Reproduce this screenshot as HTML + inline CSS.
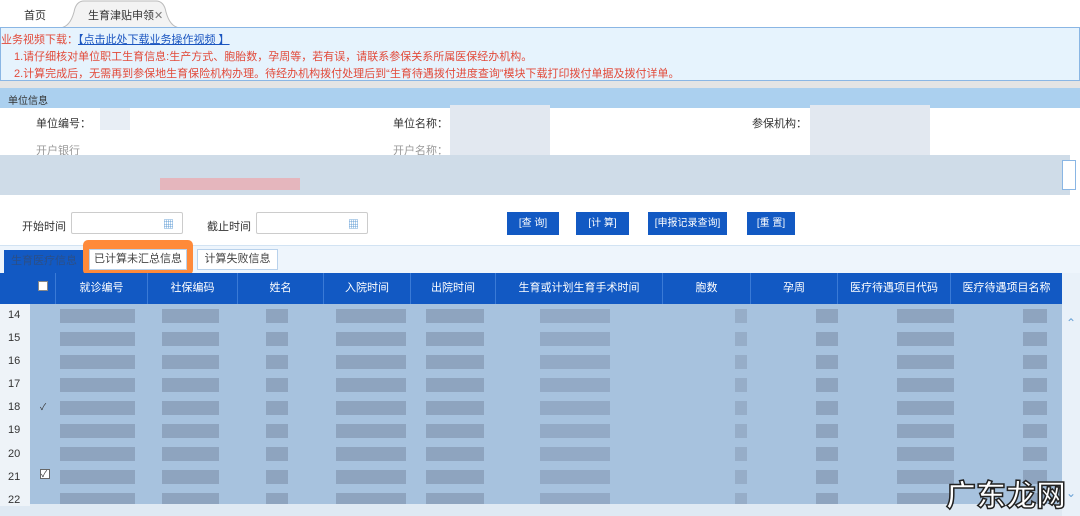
<!DOCTYPE html><html><head><meta charset="utf-8"><style>
*{margin:0;padding:0;box-sizing:border-box}
body{width:1080px;height:516px;overflow:hidden;background:#fff;font-family:"Liberation Sans","Noto Sans CJK SC",sans-serif;font-size:11px;color:#333;position:relative}
.a{position:absolute}
</style></head><body>
<div class="a" style="left:24px;top:7px;font-size:11px">首页</div>
<svg class="a" style="left:60px;top:0" width="120" height="29"><path d="M0 28 Q10 27 14 12 Q16 1 24 1 L96 1 Q104 1 106 12 Q110 27 120 28" fill="#f3f3f3" stroke="#bbb"/></svg>
<div class="a" style="left:88px;top:7px;font-size:11px">生育津贴申领<span style="color:#777">✕</span></div>
<div class="a" style="left:0;top:27px;width:1080px;height:54px;background:#e6f3fd;border:1px solid #8ab6e4"></div>
<div class="a" style="left:1px;top:31px;color:#e24a3a">业务视频下载：<span style="color:#1a55c0;text-decoration:underline">【点击此处下载业务操作视频 】</span></div>
<div class="a" style="left:14px;top:48px;color:#e24a3a">1.请仔细核对单位职工生育信息:生产方式、胞胎数，孕周等，若有误，请联系参保关系所属医保经办机构。</div>
<div class="a" style="left:14px;top:65px;color:#e24a3a">2.计算完成后，无需再到参保地生育保险机构办理。待经办机构拨付处理后到“生育待遇拨付进度查询”模块下载打印拨付单据及拨付详单。</div>
<div class="a" style="left:0;top:81px;width:1080px;height:7px;background:#e4e4e4"></div>
<div class="a" style="left:0;top:88px;width:1080px;height:20px;background:#abd0ef"></div>
<div class="a" style="left:8px;top:92px;font-size:10px">单位信息</div>
<div class="a" style="left:36px;top:115px">单位编号：</div>
<div class="a" style="left:393px;top:115px">单位名称：</div>
<div class="a" style="left:752px;top:115px">参保机构：</div>
<div class="a" style="left:36px;top:142px;color:#999">开户银行</div>
<div class="a" style="left:393px;top:142px;color:#999">开户名称：</div>
<div class="a" style="left:100px;top:108px;width:30px;height:22px;background:#e8eef5"></div>
<div class="a" style="left:450px;top:105px;width:100px;height:50px;background:#e2e8f0"></div>
<div class="a" style="left:810px;top:105px;width:120px;height:50px;background:#e2e8f0"></div>
<div class="a" style="left:0;top:155px;width:1070px;height:40px;background:#cfdce8"></div>
<div class="a" style="left:160px;top:178px;width:140px;height:12px;background:#e5b6bd"></div>
<div class="a" style="left:1062px;top:160px;width:14px;height:30px;border:1px solid #8ab6e4;background:#fff"></div>
<div class="a" style="left:22px;top:218px">开始时间</div>
<div class="a" style="left:71px;top:212px;width:112px;height:22px;border:1px solid #ccc;border-radius:2px"></div>
<div class="a" style="left:163px;top:216px;color:#4a8fd0">▦</div>
<div class="a" style="left:207px;top:218px">截止时间</div>
<div class="a" style="left:256px;top:212px;width:112px;height:22px;border:1px solid #ccc;border-radius:2px"></div>
<div class="a" style="left:348px;top:216px;color:#4a8fd0">▦</div>
<div class="a" style="left:507px;top:212px;width:52px;height:23px;background:#1259c3;color:#fff;font-size:10px;line-height:23px;text-align:center">[查 询]</div>
<div class="a" style="left:576px;top:212px;width:53px;height:23px;background:#1259c3;color:#fff;font-size:10px;line-height:23px;text-align:center">[计 算]</div>
<div class="a" style="left:648px;top:212px;width:79px;height:23px;background:#1259c3;color:#fff;font-size:10px;line-height:23px;text-align:center">[申报记录查询]</div>
<div class="a" style="left:747px;top:212px;width:48px;height:23px;background:#1259c3;color:#fff;font-size:10px;line-height:23px;text-align:center">[重 置]</div>
<div class="a" style="left:0;top:245px;width:1080px;height:28px;background:#eef5fc;border-top:1px solid #d2e3f3"></div>
<div class="a" style="left:4px;top:250px;width:80px;height:23px;background:#1259c3;color:#2c4f86;line-height:23px;text-align:center">生育医疗信息</div>
<div class="a" style="left:197px;top:249px;width:81px;height:21px;line-height:19px;text-align:center;color:#444;background:#fff;border:1px solid #b9d2ec">计算失败信息</div>
<div class="a" style="left:83px;top:240px;width:110px;height:35px;background:#ff8a3a;border-radius:5px"></div>
<div class="a" style="left:89px;top:249px;width:98px;height:21px;background:#fff;border:1px solid #b9d2ec;line-height:19px;text-align:center;color:#444">已计算未汇总信息</div>
<div class="a" style="left:0;top:273px;width:1062px;height:31px;background:#1259c3"></div>
<div class="a" style="left:1062px;top:273px;width:18px;height:243px;background:#e9f1f9"></div>
<div class="a" style="left:1066px;top:316px;color:#6aa2d6;font-size:12px">⌃</div>
<div class="a" style="left:1066px;top:486px;color:#6aa2d6;font-size:12px">⌄</div>
<div class="a" style="left:38px;top:281px;width:10px;height:10px;background:#fff;border:1px solid #888"></div>
<div class="a" style="top:273px;left:0;height:31px;width:1062px;color:#fff;font-size:11px;line-height:31px">
<span class="a" style="left:55px;width:92px;text-align:center;border-left:1px solid #3a7ad6">就诊编号</span>
<span class="a" style="left:147px;width:90px;text-align:center;border-left:1px solid #3a7ad6">社保编码</span>
<span class="a" style="left:237px;width:86px;text-align:center;border-left:1px solid #3a7ad6">姓名</span>
<span class="a" style="left:323px;width:87px;text-align:center;border-left:1px solid #3a7ad6">入院时间</span>
<span class="a" style="left:410px;width:85px;text-align:center;border-left:1px solid #3a7ad6">出院时间</span>
<span class="a" style="left:495px;width:167px;text-align:center;border-left:1px solid #3a7ad6">生育或计划生育手术时间</span>
<span class="a" style="left:662px;width:88px;text-align:center;border-left:1px solid #3a7ad6">胞数</span>
<span class="a" style="left:750px;width:87px;text-align:center;border-left:1px solid #3a7ad6">孕周</span>
<span class="a" style="left:837px;width:113px;text-align:center;border-left:1px solid #3a7ad6">医疗待遇项目代码</span>
<span class="a" style="left:950px;width:112px;text-align:center;border-left:1px solid #3a7ad6">医疗待遇项目名称</span>
</div>
<div class="a" style="left:0;top:304px;width:1062px;height:212px;background:#dfe9f3"></div>
<div class="a" style="left:0;top:304px;width:30px;height:202px;background:#eef3f8"></div>
<div class="a" style="left:30px;top:304px;width:1032px;height:200px;background:#a7c2de"></div>
<div class="a" style="left:8px;top:304px;font-size:11px;line-height:23.1px;color:#333">14<br>15<br>16<br>17<br>18<br>19<br>20<br>21<br>22</div>
<div class="a" style="left:40px;top:469px;width:10px;height:10px;background:#fff;border:1px solid #666;font-size:9px;line-height:8px">✓</div>
<div class="a" style="left:40px;top:400px;font-size:9px">✓</div>
<svg class="a" style="left:30px;top:304px" width="1032" height="200">
<defs><g id="r" fill="#8ea4bf">
<rect x="30" y="0" width="75" height="14"/><rect x="132" y="0" width="57" height="14"/><rect x="236" y="0" width="22" height="14"/><rect x="306" y="0" width="70" height="14"/><rect x="396" y="0" width="58" height="14"/><rect x="510" y="0" width="70" height="14" opacity=".8"/><rect x="705" y="0" width="12" height="14" opacity=".7"/><rect x="786" y="0" width="22" height="14"/><rect x="867" y="0" width="57" height="14"/><rect x="993" y="0" width="24" height="14"/></g></defs>
<use href="#r" y="5"/><use href="#r" y="28"/><use href="#r" y="51"/><use href="#r" y="74"/><use href="#r" y="97"/><use href="#r" y="120"/><use href="#r" y="143"/><use href="#r" y="166"/><use href="#r" y="189"/>
</svg>
<div class="a" style="left:946px;top:471px;font-size:30px;font-weight:bold;color:#fff;-webkit-text-stroke:1.5px #222;font-family:'Noto Sans CJK SC',sans-serif">广东龙网</div>
</body></html>
